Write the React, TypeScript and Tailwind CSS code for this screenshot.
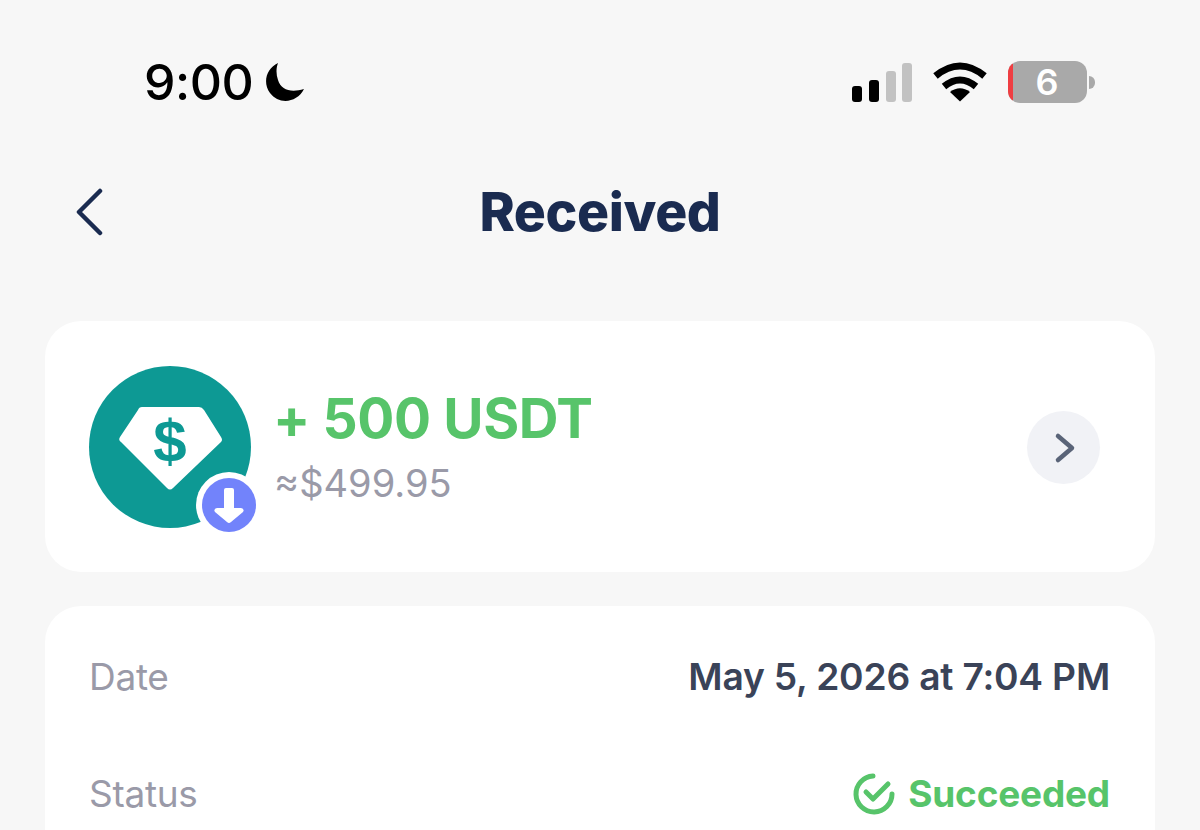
import React from "react";

function Signal() {
  return (
    <svg width="60" height="40" viewBox="0 0 60 40" className="block">
      <rect x="0" y="24" width="10" height="16" rx="3" fill="#000" />
      <rect x="17" y="18" width="10" height="22" rx="3" fill="#000" />
      <rect x="34" y="9" width="10" height="31" rx="3" fill="#c2c2c2" />
      <rect x="50" y="1" width="10" height="39" rx="3" fill="#c2c2c2" />
    </svg>
  );
}

function Wifi() {
  return (
    <svg width="54" height="40" viewBox="0 0 54 40" className="block">
      <path d="M27 39.5 L17 30 Q27 22.5 37 30 Z" fill="#000" />
      <path d="M11 24.5 Q27 11.5 43 24.5" fill="none" stroke="#000" strokeWidth="7" />
      <path d="M2.5 14 Q27 -6 51.5 14" fill="none" stroke="#000" strokeWidth="7" />
    </svg>
  );
}

function Moon() {
  return (
    <svg width="40" height="40" viewBox="0 0 40 40" className="block">
      <path d="M13 1 C2 6 -3 20 5 31 C14 43 32 41 39 27 C26 31 16 28 13 18 C11 12 11 6 13 1 Z" fill="#000" />
    </svg>
  );
}

function Coin() {
  return (
    <svg width="172" height="175" viewBox="0 0 172 175" className="block">
      <circle cx="81" cy="81" r="81" fill="#0d9994" />
      <path d="M49 44 Q50 41 53 41 L110 41 Q113 41 115 44 L132 71 Q134 74 132 76 L84 122 Q81 125 78 122 L32 76 Q29 74 31 71 Z" fill="#fff" />
      <text x="81" y="96" textAnchor="middle" fontFamily="Liberation Sans, sans-serif" fontWeight="700" fontSize="60" fill="#0d9994">$</text>
      <circle cx="140" cy="139" r="33" fill="#fff" />
      <circle cx="140" cy="139" r="27" fill="#7283fb" />
      <path d="M135 124 Q135 122 137 122 L143 122 Q145 122 145 124 L145 142 L152 142 Q156 143 154 146 L142 156 Q140 158 138 156 L126 146 Q124 143 128 142 L135 142 Z" fill="#fff" />
    </svg>
  );
}

function Row({ label, children }: { label: string; children: React.ReactNode }) {
  return (
    <div className="flex items-center justify-between h-[40px]">
      <span className="text-[37px] tracking-[-0.3px] text-[#9a9aa8] -ml-[1px]">{label}</span>
      {children}
    </div>
  );
}

export default function App() {
  return (
    <div className="h-[830px] overflow-hidden bg-[#f7f7f7] px-[45px] font-['Inter',sans-serif]">
      <div className="h-[162px] pt-[55px] pl-[99px] pr-[60px] flex justify-between items-start">
        <div className="flex items-center gap-[12px] h-[54px]">
          <span className="text-[50px] leading-none font-medium text-black tracking-[-0.5px]">9:00</span>
          <Moon />
        </div>
        <div className="flex items-center h-[54px]">
          <Signal />
          <div className="ml-[21px]"><Wifi /></div>
          <div className="ml-[21px] flex items-center">
            <div className="w-[79px] h-[42px] rounded-[12px] bg-[#a9a9a9] overflow-hidden flex">
              <div className="w-[5px] bg-[#ef3e42]" />
              <div className="flex-1 flex items-center justify-center pr-[6px] text-[36px] font-semibold text-white leading-none">6</div>
            </div>
            <div className="ml-[2px] w-[6px] h-[13px] rounded-r-full bg-[#a9a9a9]" />
          </div>
        </div>
      </div>

      <div className="relative h-[100px] flex items-center justify-center">
        <svg width="30" height="48" viewBox="0 0 30 48" className="absolute left-[29px] top-[26px]">
          <path d="M26 3 L5 24 L26 45" fill="none" stroke="#1a2b50" strokeWidth="4.5" strokeLinecap="round" strokeLinejoin="round" />
        </svg>
        <span className="text-[53.5px] font-extrabold text-[#1a2b50] tracking-[-0.4px]">Received</span>
      </div>

      <div className="mt-[59px] h-[251px] rounded-[36px] bg-white flex items-center pl-[44px] pr-[55px]">
        <div className="mt-[13px]"><Coin /></div>
        <div className="ml-[12px] -mt-[1px] flex flex-col">
          <span className="text-[55px] leading-[60px] font-bold text-[#57c46a] tracking-[-0.4px]">+ 500 USDT</span>
          <span className="mt-[14px] ml-[1px] text-[38px] leading-[42px] text-[#9a9aa8]">≈$499.95</span>
        </div>
        <div className="ml-auto mt-[2px] w-[73px] h-[73px] rounded-full bg-[#f1f2f6] flex items-center justify-center">
          <svg width="24" height="34" viewBox="0 0 24 34" className="ml-[3px]">
            <path d="M5 5 L19 17 L5 29" fill="none" stroke="#5a6478" strokeWidth="4.5" strokeLinecap="round" strokeLinejoin="round" />
          </svg>
        </div>
      </div>

      <div className="mt-[34px] h-[300px] rounded-t-[36px] bg-white px-[45px] pt-[51px] flex flex-col gap-[77px]">
        <Row label="Date">
          <span className="text-[37.2px] font-semibold text-[#3a4358] tracking-[-0.2px]">May 5, 2026 at 7:04 PM</span>
        </Row>
        <Row label="Status">
          <div className="flex items-center gap-[13px]">
            <svg width="42" height="42" viewBox="0 0 42 42">
              <path d="M20 3 A18 18 0 1 0 39 21" fill="none" stroke="#57c46a" strokeWidth="5" strokeLinecap="round" />
              <path d="M13 19 L20 26 L35 11" fill="none" stroke="#57c46a" strokeWidth="5" strokeLinecap="round" strokeLinejoin="round" />
            </svg>
            <span className="text-[37px] font-bold text-[#57c46a] tracking-[-0.2px]">Succeeded</span>
          </div>
        </Row>
      </div>
    </div>
  );
}
